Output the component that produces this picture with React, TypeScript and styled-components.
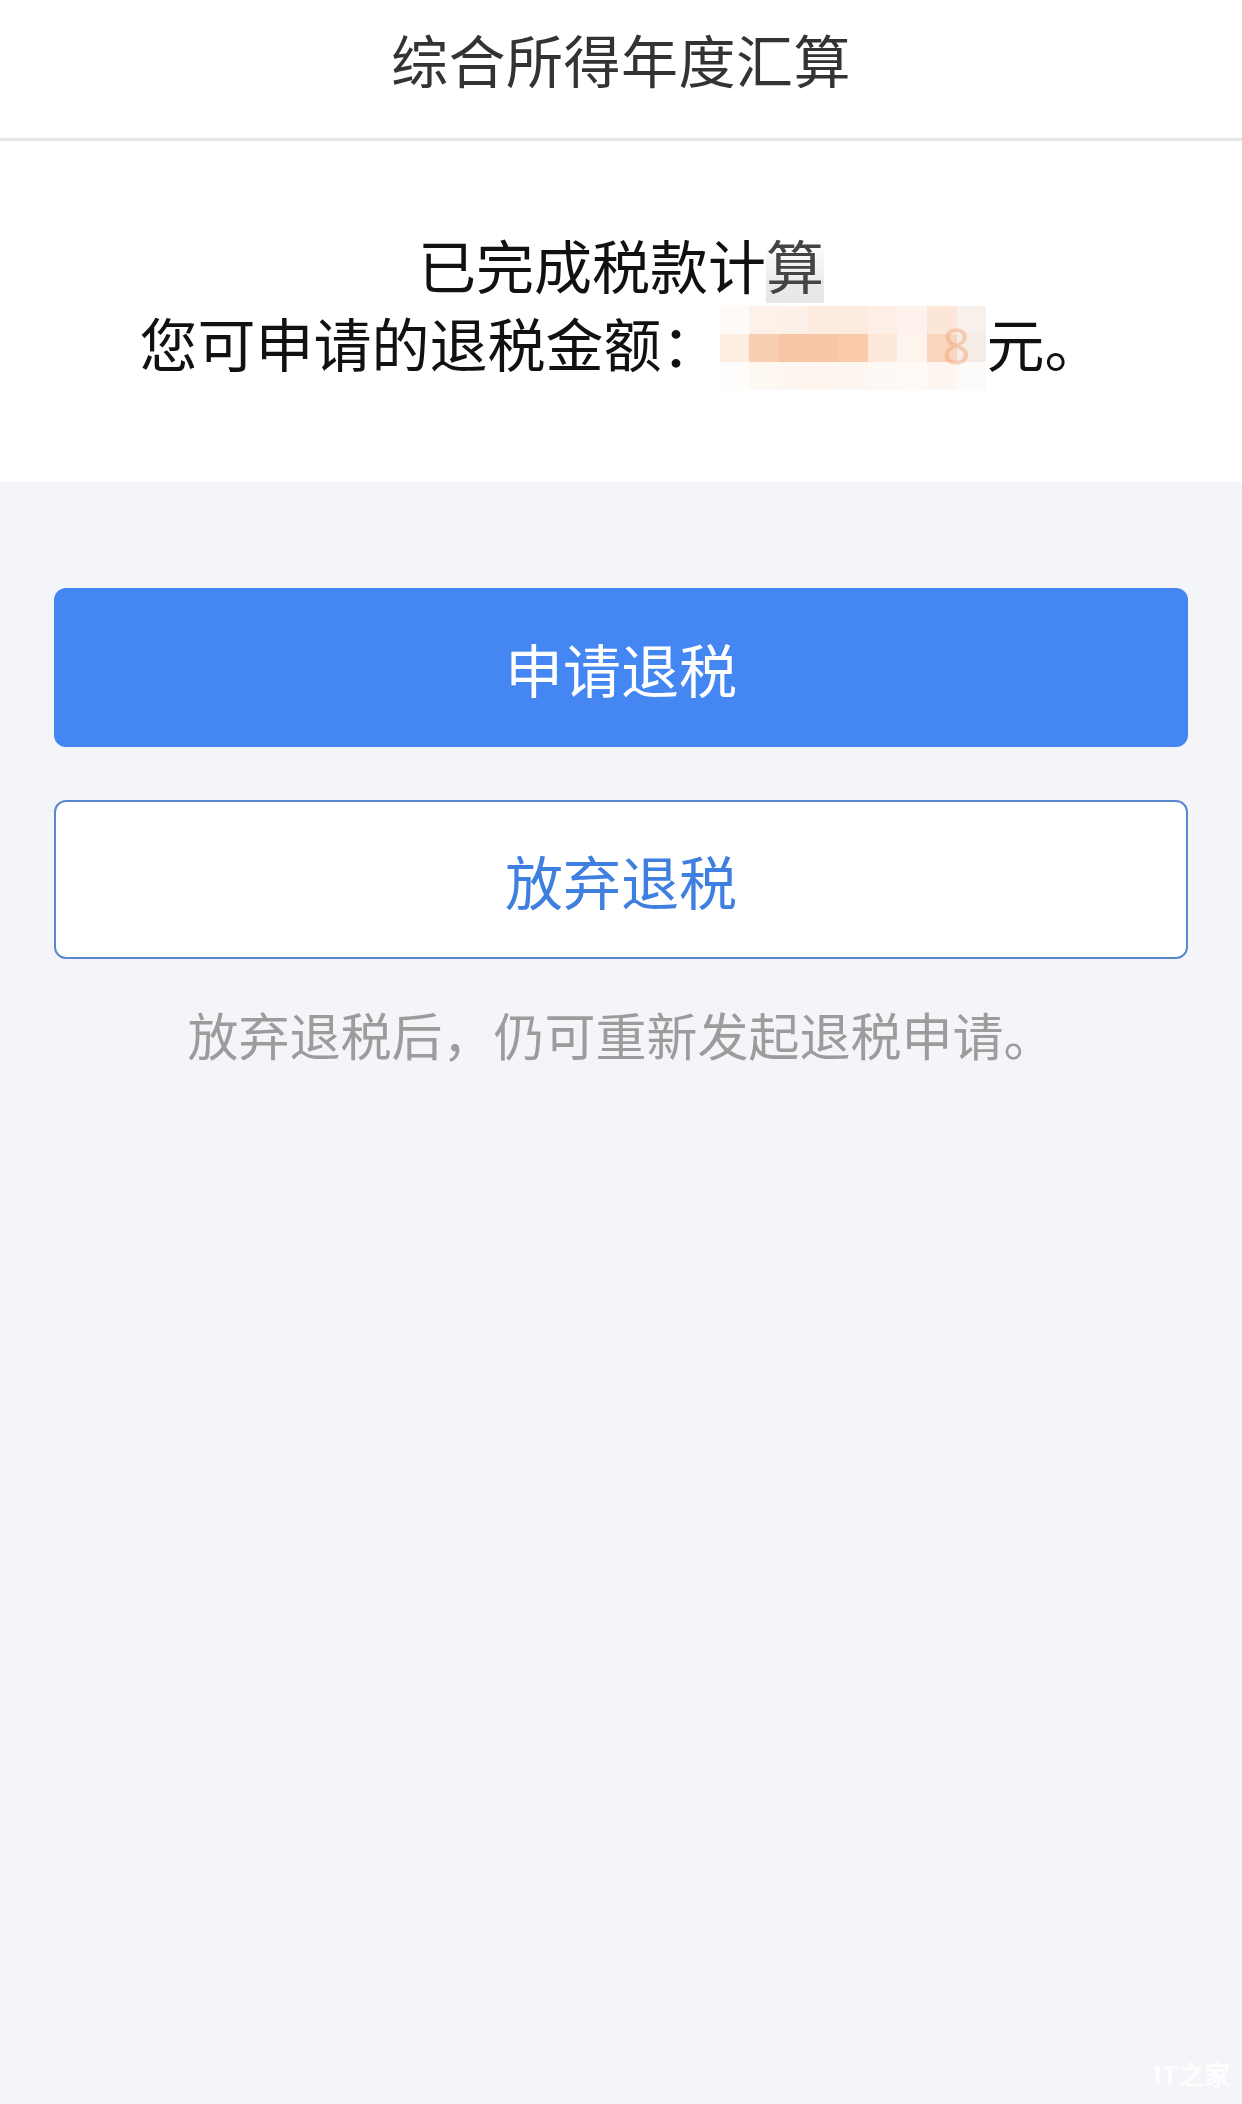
import React from 'react';
import styled, { createGlobalStyle } from 'styled-components';

const GlobalStyle = createGlobalStyle`
    html, body {
        margin: 0;
        padding: 0;
        background: #f4f5f9;
        font-family: 'Noto Sans CJK SC', 'Noto Sans', sans-serif;
    }
`;

const Page = styled.div`
    position: relative;
    min-height: 2104px;
    background: #f4f5f9;
    display: flex;
    flex-direction: column;
`;

const NavBar = styled.header`
    height: 141px;
    box-sizing: border-box;
    background: #fff;
    border-bottom: 3px solid #e4e5e7;
    display: flex;
    justify-content: center;
    padding-top: 30px;
`;

const Title = styled.h1`
    margin: 0;
    font-size: 57px;
    line-height: 1;
    font-weight: 400;
    color: #333;
    letter-spacing: 0.5px;
`;

const Summary = styled.section`
    background: #fff;
    height: 341px;
    box-sizing: border-box;
    padding-top: 84px;
    display: flex;
    flex-direction: column;
    align-items: center;
`;

const Line = styled.div`
    font-size: 58px;
    line-height: 78px;
    color: #111;
    white-space: nowrap;
    display: flex;
    align-items: flex-start;
`;

const Smudge = styled.span`
    background: linear-gradient(180deg, rgba(200, 200, 200, 0) 20%, rgba(190, 190, 190, 0.35) 80%);
    color: #444;
`;

const Mosaic = styled.span`
    position: relative;
    display: inline-grid;
    grid-template-columns: repeat(9, 1fr);
    grid-template-rows: repeat(3, 1fr);
    width: 267px;
    height: 84px;
    margin: 3px 0 -20px;
`;

const Cell = styled.span<{ $c: string }>`
    background: ${(p) => p.$c};
`;

const FaintDigit = styled.span`
    position: absolute;
    right: 16px;
    top: 14px;
    font-size: 50px;
    line-height: 1;
    color: rgba(240, 160, 110, 0.45);
    font-family: 'Noto Sans', sans-serif;
`;

const Actions = styled.main`
    display: flex;
    flex-direction: column;
    padding: 106px 54px 0;
    gap: 53px;
`;

const Button = styled.button<{ $ghost?: boolean }>`
    height: 159px;
    border-radius: 12px;
    box-sizing: border-box;
    font-family: inherit;
    font-size: 58px;
    line-height: 1;
    cursor: pointer;
    background: ${(p) => (p.$ghost ? '#fff' : '#4487f3')};
    color: ${(p) => (p.$ghost ? '#3e7fe0' : '#fff')};
    border: ${(p) => (p.$ghost ? '2px solid #5a88cf' : 'none')};
`;

const Hint = styled.p`
    margin: -14px 0 0;
    text-align: center;
    font-size: 51px;
    line-height: 72px;
    color: #9c9c9c;
`;

const Watermark = styled.span`
    position: absolute;
    right: 12px;
    bottom: 12px;
    font-size: 26px;
    font-weight: 700;
    color: rgba(255, 255, 255, 0.9);
`;

const mosaicColors = [
    '#fefaf7', '#fdf1ea', '#fdf0e8', '#fdebe0', '#fdebe0', '#fdeee6', '#fef3ec', '#fbe6d8', '#f8f0eb',
    '#fdeee4', '#f9cfb2', '#f8c6a4', '#f8c6a4', '#f9cbab', '#fde8da', '#fef4ee', '#f9d6bd', '#f6ece6',
    '#fffdfb', '#fef8f3', '#fef6f0', '#fef5ef', '#fef6f1', '#fef8f4', '#fffaf6', '#fef6f1', '#fcfbfa',
];

const App = () => {
    return (
        <Page>
            <GlobalStyle />
            <NavBar>
                <Title>综合所得年度汇算</Title>
            </NavBar>

            <Summary>
                <Line>
                    已完成税款计<Smudge>算</Smudge>
                </Line>
                <Line>
                    您可申请的退税金额：
                    <Mosaic>
                        {mosaicColors.map((c, i) => (
                            <Cell key={i} $c={c} />
                        ))}
                        <FaintDigit>8</FaintDigit>
                    </Mosaic>
                    元。
                </Line>
            </Summary>

            <Actions>
                <Button>申请退税</Button>
                <Button $ghost>放弃退税</Button>
                <Hint>放弃退税后，仍可重新发起退税申请。</Hint>
            </Actions>

            <Watermark>IT之家</Watermark>
        </Page>
    );
};

export default App;
